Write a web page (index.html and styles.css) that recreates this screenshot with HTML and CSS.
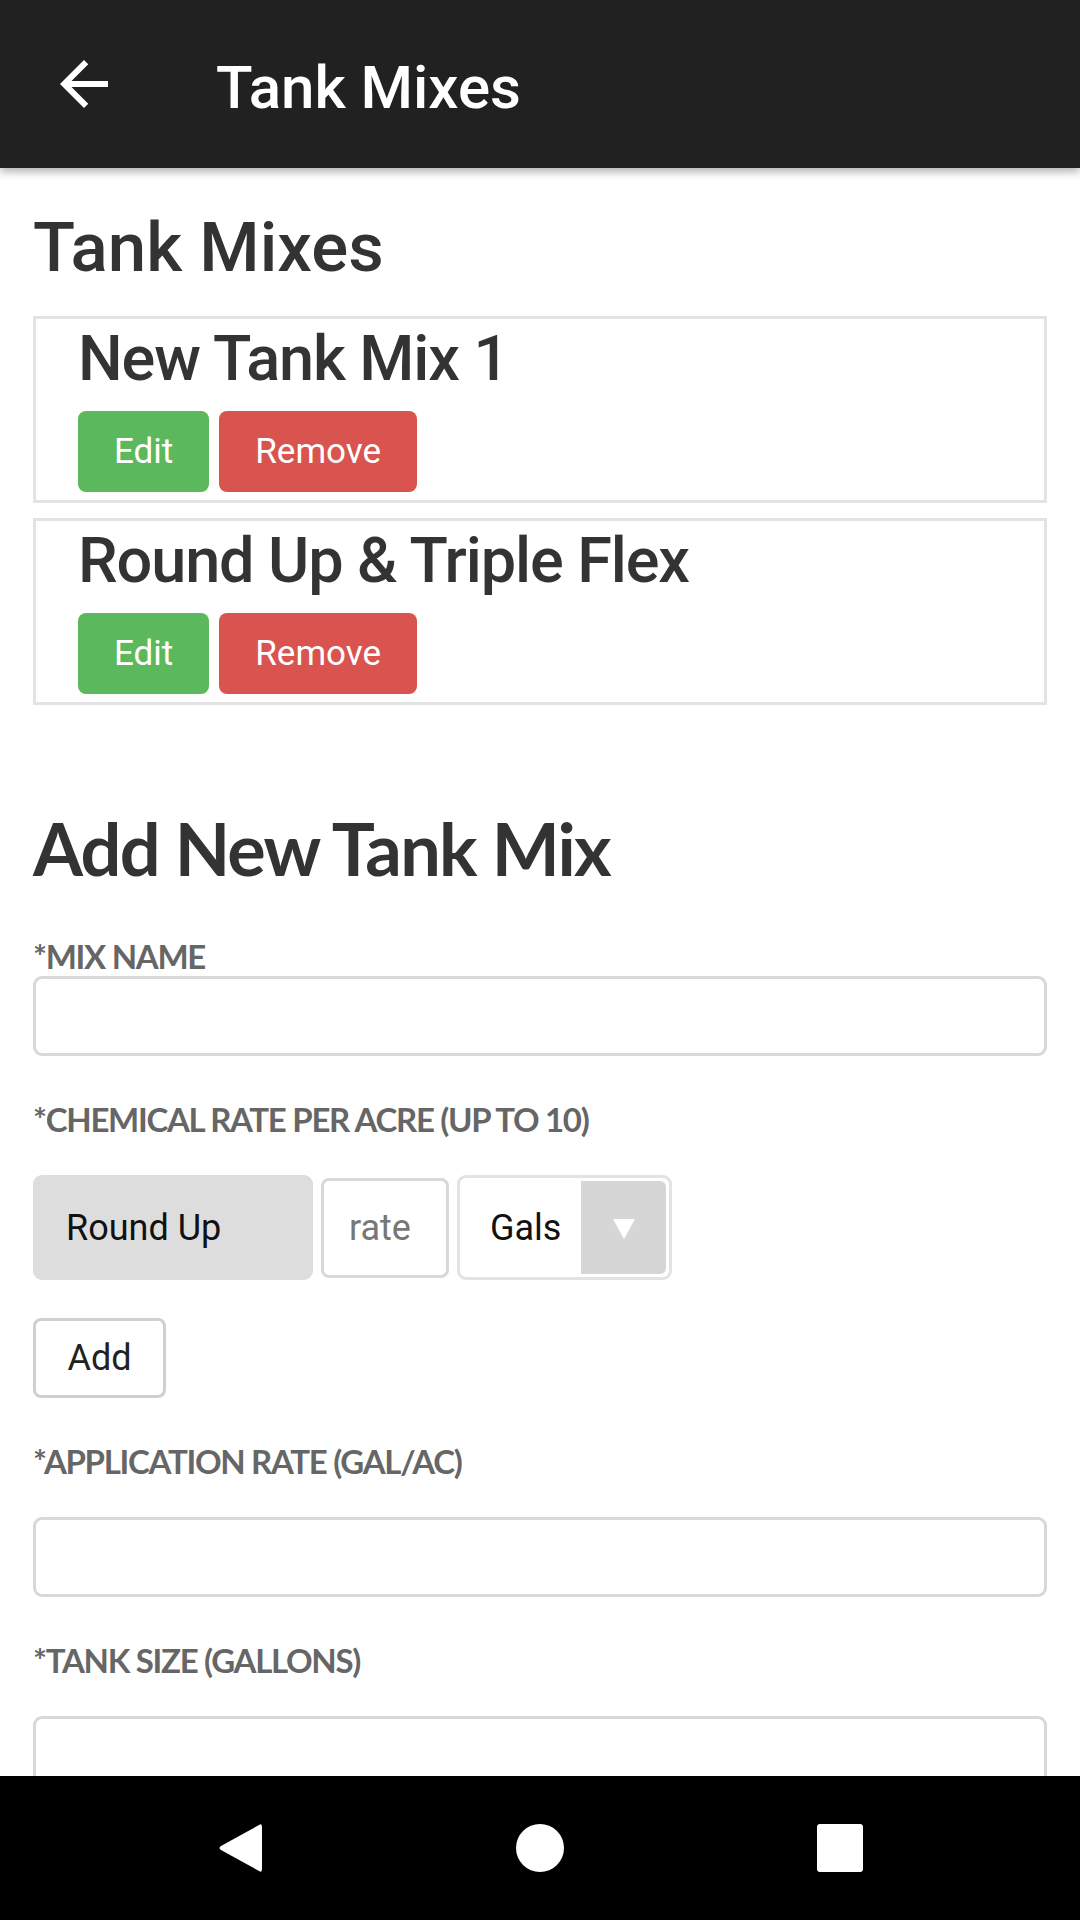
FILE: index.html
```html
<!DOCTYPE html>
<html lang="en">
<head>
    <meta charset="UTF-8">
    <meta name="viewport" content="width=device-width, initial-scale=1.0">
    <title>Tank Mixes</title>
    <link rel="stylesheet" href="styles.css">
</head>
<body>
    <div class="app">
        <header class="toolbar">
            <svg class="back-icon" viewBox="0 0 24 24" width="72" height="72">
                <path d="M20 11H7.83l5.59-5.59L12 4l-8 8 8 8 1.41-1.41L7.83 13H20v-2z" fill="#fff"/>
            </svg>
            <span class="toolbar-title">Tank Mixes</span>
        </header>

        <main class="content">
            <h2 class="page-title">Tank Mixes</h2>

            <div class="mix-card">
                <h3 class="mix-name">New Tank Mix 1</h3>
                <div class="mix-actions">
                    <button class="btn btn-edit">Edit</button>
                    <button class="btn btn-remove">Remove</button>
                </div>
            </div>
            <div class="mix-card">
                <h3 class="mix-name">Round Up &amp; Triple Flex</h3>
                <div class="mix-actions">
                    <button class="btn btn-edit">Edit</button>
                    <button class="btn btn-remove">Remove</button>
                </div>
            </div>

            <h2 class="form-title">Add New Tank Mix</h2>

            <label class="field-label first">*Mix Name</label>
            <input type="text" class="text-box">

            <label class="field-label">*Chemical Rate per Acre (up to 10)</label>
            <div class="chem-row">
                <div class="chem-name">Round Up</div>
                <input type="text" class="rate-box" placeholder="rate">
                <div class="unit-select">
                    <span class="unit-value">Gals</span>
                    <span class="unit-arrow">
                        <svg viewBox="0 0 24 24" width="24" height="24">
                            <polygon points="1,3 23,3 12,23" fill="#fff"/>
                        </svg>
                    </span>
                </div>
            </div>
            <button class="btn-add">Add</button>

            <label class="field-label">*Application Rate (gal/ac)</label>
            <input type="text" class="text-box">

            <label class="field-label">*Tank Size (gallons)</label>
            <input type="text" class="text-box">
        </main>

        <nav class="nav-bar">
            <span class="nav-slot">
                <svg viewBox="0 0 46 52" width="46" height="52">
                    <path d="M42 3 Q45 1 45 5 L45 47 Q45 51 42 49 L4 28 Q1 26 4 24 Z" fill="#fff"/>
                </svg>
            </span>
            <span class="nav-slot">
                <svg viewBox="0 0 50 50" width="50" height="50">
                    <circle cx="25" cy="25" r="24" fill="#fff"/>
                </svg>
            </span>
            <span class="nav-slot">
                <svg viewBox="0 0 46 48" width="46" height="48">
                    <rect x="0" y="0" width="46" height="48" rx="3" fill="#fff"/>
                </svg>
            </span>
        </nav>
    </div>
</body>
</html>
```

FILE: styles.css
```css
body {
    margin: 0;
    font-family: Roboto, "Helvetica Neue", Arial, sans-serif;
    color: #333;
    background-color: #fff;
}
.app {
    width: 1080px;
    height: 1920px;
    display: flex;
    flex-direction: column;
    overflow: hidden;
}
.toolbar {
    height: 168px;
    flex-shrink: 0;
    display: flex;
    align-items: center;
    background-color: #212121;
    box-shadow: 0 4px 8px rgba(0, 0, 0, 0.3);
    position: relative;
    z-index: 1;
}
.back-icon {
    margin-left: 48px;
}
.toolbar-title {
    margin-left: 96px;
    padding-top: 6px;
    font-size: 60px;
    font-weight: 500;
    color: #fff;
}
.content {
    flex: 1;
    overflow: hidden;
    padding: 0 33px;
}
.page-title {
    margin: 40px 0 28px;
    font-size: 69px;
    line-height: 80px;
    font-weight: 500;
}
.mix-card {
    border: 3px solid #e3e3e3;
    padding: 4px 42px 8px;
    margin-bottom: 15px;
}
.mix-name {
    margin: 0 0 16px;
    font-size: 63px;
    line-height: 72px;
    font-weight: 500;
    letter-spacing: -1.1px;
}
.mix-actions {
    display: flex;
    gap: 10px;
}
.btn {
    height: 81px;
    padding: 0 36px;
    border: none;
    border-radius: 8px;
    font-family: Roboto, sans-serif;
    font-size: 35px;
    color: #fff;
}
.btn-edit {
    background-color: #5cb85c;
}
.btn-remove {
    background-color: #d9534f;
}
.form-title {
    margin: 103px 0 0;
    font-family: Lato, sans-serif;
    font-size: 72px;
    line-height: 80px;
    font-weight: 700;
    letter-spacing: -1.7px;
}
.field-label {
    display: block;
    margin: 43px 0 36px;
    font-family: Lato, sans-serif;
    font-size: 33px;
    line-height: 40px;
    font-weight: 700;
    letter-spacing: -1.3px;
    text-transform: uppercase;
    color: #666;
}
.field-label.first {
    margin: 48px 0 0;
}
.text-box {
    display: block;
    box-sizing: border-box;
    width: 100%;
    height: 80px;
    border: 3px solid #d8d8d8;
    border-radius: 9px;
    background-color: #fff;
}
.chem-row {
    display: flex;
    align-items: center;
    gap: 8px;
    height: 105px;
}
.chem-name {
    box-sizing: border-box;
    width: 280px;
    height: 105px;
    padding-left: 33px;
    display: flex;
    align-items: center;
    background-color: #ddd;
    border-radius: 9px;
    font-size: 36px;
    color: #111;
}
.rate-box {
    box-sizing: border-box;
    width: 128px;
    height: 100px;
    padding: 0 0 0 25px;
    border: 3px solid #d8d8d8;
    border-radius: 8px;
    font-family: Roboto, sans-serif;
    font-size: 36px;
}
.rate-box::placeholder {
    color: #777;
}
.unit-select {
    box-sizing: border-box;
    width: 215px;
    height: 105px;
    padding: 3px;
    display: flex;
    border: 3px solid #e3e3e3;
    border-radius: 9px;
}
.unit-value {
    flex: 1;
    display: flex;
    align-items: center;
    padding-left: 27px;
    font-size: 36px;
    color: #111;
}
.unit-arrow {
    width: 85px;
    display: flex;
    align-items: center;
    justify-content: center;
    background-color: #d6d6d6;
    border-radius: 0 6px 6px 0;
}
.btn-add {
    display: block;
    margin-top: 38px;
    width: 133px;
    height: 80px;
    border: 3px solid #d0d0d0;
    border-radius: 8px;
    background-color: #fff;
    font-family: Roboto, sans-serif;
    font-size: 36px;
    color: #222;
}
.nav-bar {
    height: 144px;
    flex-shrink: 0;
    display: flex;
    align-items: center;
    justify-content: center;
    background-color: #000;
}
.nav-slot {
    width: 300px;
    display: flex;
    justify-content: center;
}
```
